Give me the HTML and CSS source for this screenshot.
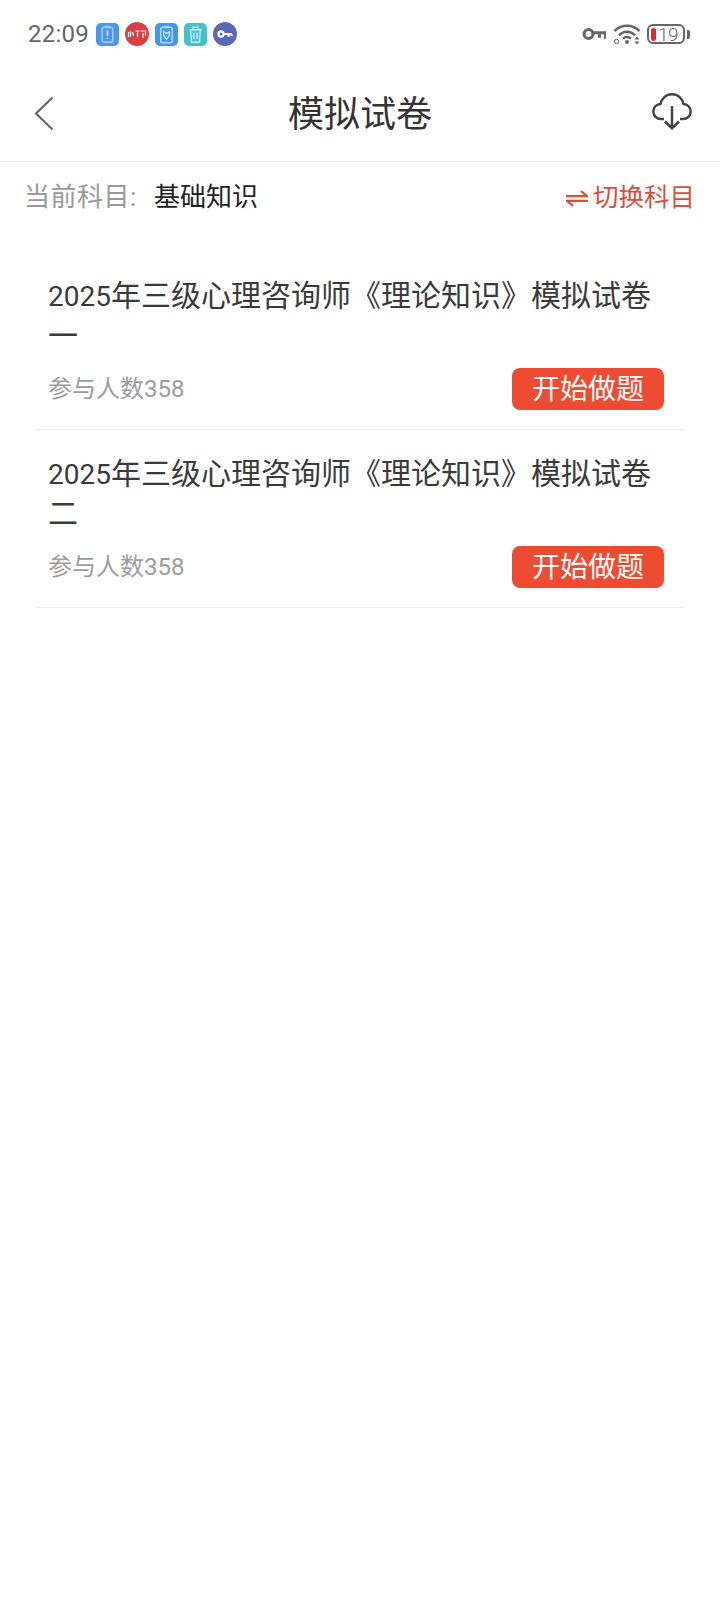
FILE: index.html
```html
<!DOCTYPE html>
<html lang="zh">
<head>
<meta charset="utf-8">
<title>模拟试卷</title>
<link rel="stylesheet" href="styles.css">
</head>
<body>
<div class="status">
  <div class="status-left">
    <span class="time">22:09</span>
    <svg class="ni" viewBox="0 0 24 24"><rect width="24" height="24" rx="5" fill="#4a97ef"/><rect x="6.500" y="4.500" width="11" height="15.500" rx="2" fill="none" stroke="#a9d0fa" stroke-width="1.600"/><rect x="9.500" y="3" width="5" height="2.500" fill="#a9d0fa"/><path d="M12 8v5.500M12 15.200v1.600" stroke="#d5e8fd" stroke-width="1.600"/></svg>
    <svg class="ni round" viewBox="0 0 24 24"><circle cx="12" cy="12" r="12" fill="#db3f42"/><path d="M3.500 10v5M5.500 9v6M7.500 10l1 4M10.500 9h4M12.500 9v6M15.500 9h5v4.500M18 11v5" stroke="#fff" stroke-width="1.200" fill="none"/></svg>
    <svg class="ni" viewBox="0 0 24 24"><rect width="24" height="24" rx="5" fill="#3f98ee"/><rect x="6" y="4.500" width="12" height="16" rx="2" fill="none" stroke="#b4d8fb" stroke-width="1.600"/><rect x="9.500" y="3" width="5" height="2.500" fill="#b4d8fb"/><path d="M9 9l3 2 3-2v4l-3 4-3-4z" fill="none" stroke="#d5e8fd" stroke-width="1.300"/></svg>
    <svg class="ni" viewBox="0 0 24 24"><rect width="24" height="24" rx="5" fill="#44c1cd"/><path d="M5.500 7h13M9.500 7V4.500h5V7M7 7l.8 13h8.400L17 7M10.300 10v7M13.700 10v7" fill="none" stroke="#bdf0f2" stroke-width="1.500"/></svg>
    <svg class="ni round" viewBox="0 0 24 24"><circle cx="12" cy="12" r="12" fill="#5a67b8"/><circle cx="8" cy="12" r="2.600" fill="none" stroke="#fff" stroke-width="2.200"/><path d="M10.500 12h8.500M15.500 12v2.800M18.500 12v2.200" stroke="#fff" stroke-width="2.200" fill="none"/></svg>
  </div>
  <div class="status-right">
    <svg class="key" viewBox="0 0 24 14"><circle cx="6.500" cy="7" r="4.500" fill="none" stroke="#666" stroke-width="3"/><path d="M11 5.800h12.500v6M17.500 5.800v5" fill="none" stroke="#666" stroke-width="3"/></svg>
    <svg class="wifi" viewBox="0 0 28 22"><path d="M1.500 8C8 1 20 1 26.500 8" fill="none" stroke="#666" stroke-width="2.600"/><path d="M6 12.500C10.500 7.500 17.500 7.500 22 12.500" fill="none" stroke="#666" stroke-width="2.600"/><path d="M10 15.500C12.500 13.500 15.500 13.500 18 15.500" fill="none" stroke="#666" stroke-width="2.400"/><circle cx="14" cy="19" r="1.900" fill="#666"/><circle cx="3.500" cy="18.500" r="2.200" fill="none" stroke="#666" stroke-width="1"/><path d="M21.500 16.500l2.500-3 2.500 3zM21.500 18.500l2.500 3 2.500-3z" fill="#666"/></svg>
    <div class="battery">
      <div class="batt-body"><span class="batt-fill"></span><span class="batt-num">19</span></div>
      <span class="batt-cap"></span>
    </div>
  </div>
</div>
<header class="nav">
  <svg class="back" viewBox="0 0 20 35"><path d="M18.500 1.500L2 17.500 18.500 33.500" fill="none" stroke="#666" stroke-width="2.200"/></svg>
  <h1 class="nav-title">模拟试卷</h1>
  <svg class="cloud" viewBox="0 0 40 37"><path d="M12 26H9C4.500 26 1.300 22.500 1.300 18.500C1.300 14.500 4.500 11 8.500 11C9.500 5.500 14 1.300 20 1.300C26 1.300 30.500 5.500 31.500 11C35.500 11 38.700 14.500 38.700 18.500C38.700 22.500 35.500 26 31 26H28" fill="none" stroke="#444" stroke-width="2.500"/><path d="M20 13V35M13 28.500L20 35.200L27 28.500" fill="none" stroke="#444" stroke-width="2.500"/></svg>
</header>
<div class="subject">
  <div class="subject-info"><span class="subject-label">当前科目:</span><span class="subject-name">基础知识</span></div>
  <div class="switch"><svg class="switch-icon" viewBox="0 0 22 17"><path d="M0 6.200H21L15 1M22 10.800H1L7 16" fill="none" stroke="#d5503f" stroke-width="2.200"/></svg><span>切换科目</span></div>
</div>
<main class="list">
  <article class="paper">
    <h2 class="paper-title"><span class="year">2025</span><span>年三级心理咨询师《理论知识》模拟试卷</span><span>一</span></h2>
    <div class="paper-foot"><span class="count">参与人数358</span><span class="start">开始做题</span></div>
  </article>
  <article class="paper">
    <h2 class="paper-title"><span class="year">2025</span><span>年三级心理咨询师《理论知识》模拟试卷</span><span>二</span></h2>
    <div class="paper-foot"><span class="count">参与人数358</span><span class="start">开始做题</span></div>
  </article>
</main>
</body>
</html>
```
FILE: styles.css
```css
* { box-sizing: border-box; }
html, body { margin: 0; padding: 0; background: #fff; }
body { width: 720px; height: 1600px; overflow: hidden; font-family: Roboto, "Noto Sans CJK SC", sans-serif; font-weight: 400; }
.status { height: 68px; padding: 0 30px 0 28px; display: flex; align-items: center; justify-content: space-between; }
.status-left { display: flex; align-items: center; }
.time { font-size: 24px; color: #666; letter-spacing: .25px; margin-right: 7px; }
.ni { width: 23px; height: 23px; margin-right: 6px; }
.round { width: 24px; height: 24px; }
.status-right { display: flex; align-items: center; }
.key { width: 24px; height: 14px; margin-right: 7px; }
.wifi { width: 28px; height: 22px; margin-right: 6px; }
.battery { display: flex; align-items: center; }
.batt-body { width: 38px; height: 20px; border: 2px solid #666; border-radius: 6px; display: flex; align-items: center; padding-left: 2px; }
.batt-fill { width: 5px; height: 13px; background: #e5262c; border-radius: 3px; margin-right: 2px; }
.batt-num { font-size: 19px; line-height: 17px; color: #666; font-weight: 300; letter-spacing: -.5px; }
.batt-cap { width: 3px; height: 9px; background: #666; border-radius: 0 2px 2px 0; margin-left: 2px; }
.nav { height: 94px; padding: 0 28px 2px; display: grid; grid-template-columns: 1fr auto 1fr; align-items: center; border-bottom: 1px solid #e9e9e9; }
.back { width: 20px; height: 35px; margin-left: 6px; }
.nav-title { margin: 2px 0 0; font-size: 36px; line-height: 50px; font-weight: 400; color: #333; }
.cloud { width: 40px; height: 37px; justify-self: end; margin-bottom: 4px; }
.subject { height: 66px; padding: 0 25px 2px 24px; display: flex; align-items: center; justify-content: space-between; }
.subject-info { display: flex; align-items: center; }
.subject-label { font-size: 26px; color: #999; width: 130px; letter-spacing: .5px; }
.subject-name { font-size: 26px; color: #222; }
.switch { display: flex; align-items: center; font-size: 25.5px; color: #d5503f; }
.switch-icon { width: 22px; height: 17px; margin: 8px 5px 0 0; }
.list { padding: 24px 36px 0; }
.paper { height: 178px; padding: 24px 12px 0; border-bottom: 1px solid #eee; display: flex; flex-direction: column; }
.paper-title { margin: 0; font-size: 30px; line-height: 39px; color: #3a3a3a; font-weight: 400; }
.year { font-size: 28px; }
.paper-foot { margin-top: 13px; padding-right: 8px; display: flex; align-items: center; justify-content: space-between; }
.count { font-size: 24px; color: #9c9c9c; margin-bottom: 5px; }
.start { width: 152px; height: 42px; border-radius: 8px; background: #ee4b33; color: #fff; font-size: 28px; line-height: 44px; text-align: center; }
```
